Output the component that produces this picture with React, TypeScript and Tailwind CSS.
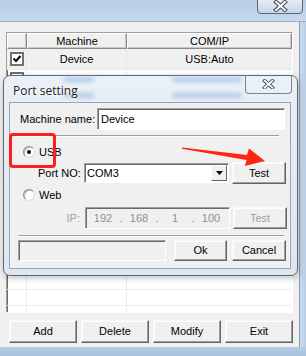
import React from 'react';

const font = "font-['Liberation_Sans',Arial,sans-serif]";

// Classic raised push button
const Btn = ({ label, w, disabled = false }: { label: string; w: string; disabled?: boolean }) => (
  <div
    className={`${w} h-full flex items-center justify-center bg-[#f0f0f0] border border-t-[#f8f8f8] border-l-[#f8f8f8] border-r-[#646464] border-b-[#646464] shadow-[inset_-1px_-1px_0_#a0a0a0,inset_1px_1px_0_#ffffff] text-[11px] ${
      disabled ? 'text-[#a0a0a0]' : 'text-black'
    }`}
  >
    {label}
  </div>
);

const Radio = ({ checked }: { checked?: boolean }) => (
  <div className="w-[12px] h-[12px] rounded-full bg-white border border-t-[#8a8a8a] border-l-[#8a8a8a] border-r-[#dcdcdc] border-b-[#dcdcdc] shadow-[inset_1px_1px_0_#bdbdbd] flex items-center justify-center">
    {checked && <div className="w-[4px] h-[4px] rounded-full bg-black" />}
  </div>
);

const sunken =
  'border border-t-[#a0a0a0] border-l-[#a0a0a0] border-r-white border-b-white shadow-[inset_1px_1px_0_#696969]';

const CloseX = ({ size = 15 }: { size?: number }) => (
  <svg width={size} height={size * 0.8} viewBox="0 0 15 12">
    <path d="M3 2 L12 10 M12 2 L3 10" stroke="#3c4654" strokeWidth="4" strokeLinecap="square" />
    <path d="M3 2 L12 10 M12 2 L3 10" stroke="#ffffff" strokeWidth="2" strokeLinecap="square" />
  </svg>
);

const Check = () => (
  <svg width="10" height="10" viewBox="0 0 10 10">
    <path d="M1.5 4.5 L4 7 L8.5 2" fill="none" stroke="#000" strokeWidth="2" />
  </svg>
);

// blurred smudge of the list rows seen through the glass frame
const Smudge = ({ cls }: { cls: string }) => (
  <div className={`absolute h-[5px] rounded-full bg-[#8fb2dc] blur-[2px] opacity-60 ${cls}`} />
);

const App: React.FC = () => {
  const rows = [20, 20, 20, 20, 20, 20, 20, 20, 20, 20, 20, 16, 16];

  return (
    <div className={`relative w-[306px] h-[356px] overflow-hidden bg-[#c3d6eb] ${font}`}>
      {/* Title strip of main window */}
      <div className="h-[22px] bg-gradient-to-b from-[#b8cfe8] to-[#c6d8ec] border-b border-[#9fb0c2] flex justify-end pr-[3px]">
        <div className="w-[46px] h-[15px] -mt-px rounded-b-[4px] border border-[#5b6776] bg-gradient-to-b from-[#e6edf5] to-[#c9d6e4] flex items-start justify-center">
          <CloseX />
        </div>
      </div>

      <div className="flex">
        {/* Main client area */}
        <div className="w-[300px] h-[325px] bg-[#f0f0f0] border-r border-[#8d9aa8] flex flex-col pt-[10px] px-[6px]">
          {/* List */}
          <div className={`h-[281px] bg-white ${sunken} overflow-hidden flex flex-col text-[11px] text-black`}>
            <div className="flex h-[16px] shrink-0 bg-[#f0f0f0]">
              {[
                ['w-[20px]', ''],
                ['w-[100px]', 'Machine'],
                ['flex-1', 'COM/IP'],
              ].map(([w, t], i) => (
                <div
                  key={i}
                  className={`${w} flex items-center justify-center border border-t-white border-l-white border-r-[#8a8a8a] border-b-[#8a8a8a] shadow-[inset_-1px_-1px_0_#c8c8c8]`}
                >
                  {t}
                </div>
              ))}
            </div>
            <div className="flex h-[21px] shrink-0 bg-[#f0f0f0] border-b border-[#e8e8e8]">
              <div className="w-[20px] flex items-center justify-center border-r border-[#e8e8e8]">
                <div className="w-[14px] h-[14px] bg-white border-2 border-[#707070] flex items-center justify-center">
                  <Check />
                </div>
              </div>
              <div className="w-[100px] flex items-center justify-center border-r border-[#e8e8e8]">Device</div>
              <div className="flex-1 flex items-center justify-center">USB:Auto</div>
            </div>
            {rows.map((h, i) => (
              <div key={i} className="flex shrink-0 border-b border-[#ececec]" style={{ height: h }}>
                <div className="w-[20px] border-r border-[#ececec] flex justify-center pt-[2px]">
                  {i < 3 && <div className="w-[14px] h-[14px] bg-white border-2 border-[#707070]" />}
                </div>
                <div className="w-[100px] border-r border-[#ececec]" />
                <div className="flex-1" />
              </div>
            ))}
          </div>

          {/* Bottom buttons */}
          <div className="mt-[7px] h-[23px] ml-[3px] flex gap-[4px]">
            <Btn label="Add" w="w-[68px]" />
            <Btn label="Delete" w="w-[68px]" />
            <Btn label="Modify" w="w-[68px]" />
            <Btn label="Exit" w="w-[68px]" />
          </div>
        </div>
        <div className="flex-1 bg-gradient-to-r from-[#c9dbed] to-[#b9cfe6]" />
      </div>
      <div className="h-[9px] bg-gradient-to-b from-[#b6cce4] to-[#a9c1dc]" />

      {/* Port setting dialog */}
      <div className="absolute left-[3px] top-[75px] w-[295px] h-[201px] rounded-[7px] border border-[#5d6772] bg-gradient-to-b from-[#e9f0f7] to-[#dce7f2] shadow-[1px_2px_6px_rgba(0,0,0,0.25)] pt-[27px] pl-[6px] pr-[5px] pb-[5px]">
        <Smudge cls="left-[60px] top-[1px] w-[30px]" />
        <Smudge cls="left-[168px] top-[1px] w-[70px]" />
        <Smudge cls="left-[60px] top-[17px] w-[30px]" />
        <Smudge cls="left-[168px] top-[17px] w-[70px]" />

        <div className="absolute left-[9px] top-[6px] text-[12px] text-[#1a1a1a] font-['Open_Sans',sans-serif] [text-shadow:0_0_6px_#ffffff,0_0_3px_#ffffff]">
          Port setting
        </div>
        <div className="absolute right-[5px] top-[-1px] w-[47px] h-[19px] rounded-b-[4px] border border-[#7a838e] border-t-0 flex items-center justify-center">
          <CloseX size={13} />
        </div>

        {/* client area */}
        <div className="relative w-[282px] h-[167px] bg-[#f0f0f0] border border-[#9aa5b1] -ml-px -mt-px flex flex-col text-[11px] text-black">
          <div className="mt-[5px] h-[22px] flex items-center pl-[10px] pr-[5px]">
            <span>Machine name:</span>
            <div className={`ml-auto w-[188px] h-full bg-white ${sunken} flex items-center pl-[3px]`}>Device</div>
          </div>

          <div className="mt-[5px] ml-[3px] w-[266px] h-[2px] border-t border-[#a0a0a0] border-b border-b-white" />

          <div className="mt-[9px] h-[12px] flex items-center pl-[13px] gap-[4px]">
            <Radio checked />
            <span>USB</span>
          </div>

          <div className="mt-[4px] h-[22px] flex items-center pl-[28px]">
            <span className="w-[46px]">Port NO:</span>
            <div className={`w-[145px] h-[20px] bg-white ${sunken} flex items-center pl-[2px]`}>
              <span className="flex-1">COM3</span>
              <div className="w-[16px] h-[16px] mr-px bg-[#f0f0f0] border border-t-white border-l-white border-r-[#646464] border-b-[#646464] flex items-center justify-center">
                <svg width="7" height="4" viewBox="0 0 7 4">
                  <path d="M0 0 H7 L3.5 4 Z" fill="#000" />
                </svg>
              </div>
            </div>
            <div className="ml-[3px] h-full">
              <Btn label="Test" w="w-[54px]" />
            </div>
          </div>

          <div className="mt-[5px] h-[12px] flex items-center pl-[13px] gap-[4px]">
            <Radio />
            <span>Web</span>
          </div>

          <div className="mt-[6px] h-[22px] flex items-center">
            <span className="w-[72px] text-right pr-[2px] text-[#a0a0a0]">IP:</span>
            <div className={`ml-[3px] w-[145px] h-full bg-[#f0f0f0] ${sunken} flex items-center pl-[2px] text-[#8f8f8f]`}>
              <span className="w-[30px] text-center">192</span>
              <span className="w-[6px] text-center">.</span>
              <span className="w-[30px] text-center">168</span>
              <span className="w-[6px] text-center">.</span>
              <span className="w-[30px] text-center">1</span>
              <span className="w-[6px] text-center">.</span>
              <span className="w-[30px] text-center">100</span>
            </div>
            <div className="ml-[3px] h-full">
              <Btn label="Test" w="w-[54px]" disabled />
            </div>
          </div>

          <div className="mt-[6px] ml-[8px] w-[266px] h-[2px] border-t border-[#a0a0a0] border-b border-b-white" />

          <div className="mt-[3px] h-[21px] flex items-center pl-[8px]">
            <div className={`w-[148px] h-full bg-[#f0f0f0] ${sunken}`} />
            <div className="ml-[8px] h-full">
              <Btn label="Ok" w="w-[53px]" />
            </div>
            <div className="ml-[5px] h-full">
              <Btn label="Cancel" w="w-[54px]" />
            </div>
          </div>
        </div>
      </div>

      {/* Annotation: red box and arrow */}
      <div className="absolute left-[9px] top-[133px] w-[47px] h-[35px] border-[3px] border-[#ff1e1e] rounded-[4px]" />
      <svg className="absolute left-0 top-0" width="306" height="356" viewBox="0 0 306 356">
        <polygon
          points="182,147.5 247,155 249,148.5 265,161 245,166 246.5,160 182,148.8"
          fill="#ff2414"
        />
      </svg>
    </div>
  );
};

export default App;
